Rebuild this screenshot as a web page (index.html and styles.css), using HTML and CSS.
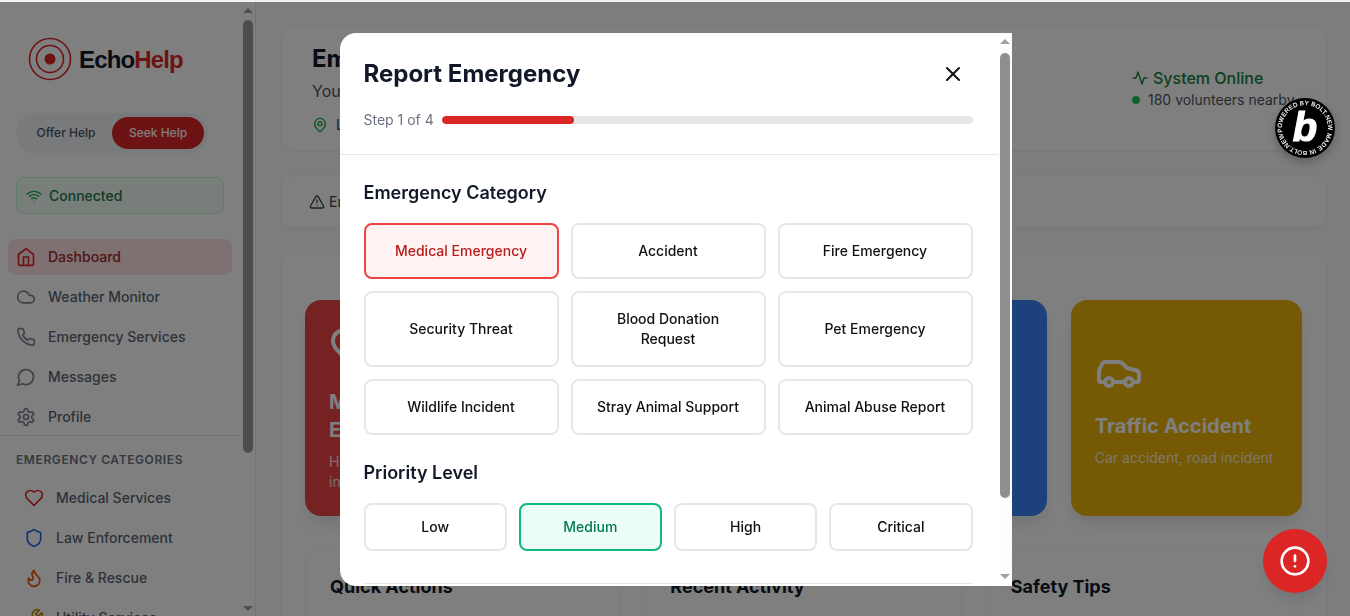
FILE: index.html
```html
<!DOCTYPE html>
<html lang="en">
<head>
<meta charset="utf-8">
<title>EchoHelp</title>
<link rel="stylesheet" href="styles.css">
</head>
<body>
<div class="app">
  <aside class="sidebar">
    <div class="side-content">
      <div class="logo">
        <svg class="logo-mark" viewBox="0 0 44 44"><circle cx="22" cy="22" r="20.5"/><circle cx="22" cy="22" r="13.5"/><circle class="dot" cx="22" cy="22" r="5.5"/></svg>
        <span class="logo-text">Echo<b>Help</b></span>
      </div>
      <div class="toggle"><span class="toggle-off">Offer Help</span><span class="toggle-on">Seek Help</span></div>
      <div class="status"><svg class="ico i16" viewBox="0 0 24 24"><path d="M5 12.55a11 11 0 0 1 14.08 0"/><path d="M1.42 9a16 16 0 0 1 21.16 0"/><path d="M8.53 16.11a6 6 0 0 1 6.95 0"/><path d="M12 20h.01"/></svg>Connected</div>
      <nav class="nav">
        <a class="nav-item active"><svg class="ico i20" viewBox="0 0 24 24"><path d="m3 9 9-7 9 7v11a2 2 0 0 1-2 2H5a2 2 0 0 1-2-2z"/><path d="M9 22V12h6v10"/></svg>Dashboard</a>
        <a class="nav-item"><svg class="ico i20" viewBox="0 0 24 24"><path d="M17.5 19H9a7 7 0 1 1 6.71-9h1.79a4.5 4.5 0 1 1 0 9Z"/></svg>Weather Monitor</a>
        <a class="nav-item"><svg class="ico i20" viewBox="0 0 24 24"><path d="M22 16.92v3a2 2 0 0 1-2.18 2 19.79 19.79 0 0 1-8.63-3.07 19.5 19.5 0 0 1-6-6 19.79 19.79 0 0 1-3.07-8.67A2 2 0 0 1 4.11 2h3a2 2 0 0 1 2 1.72 12.84 12.84 0 0 0 .7 2.81 2 2 0 0 1-.45 2.11L8.09 9.91a16 16 0 0 0 6 6l1.27-1.27a2 2 0 0 1 2.11-.45 12.84 12.84 0 0 0 2.81.7A2 2 0 0 1 22 16.92z"/></svg>Emergency Services</a>
        <a class="nav-item"><svg class="ico i20" viewBox="0 0 24 24"><path d="M7.9 20A9 9 0 1 0 4 16.1L2 22Z"/></svg>Messages</a>
        <a class="nav-item"><svg class="ico i20" viewBox="0 0 24 24"><path d="M12.22 2h-.44a2 2 0 0 0-2 2v.18a2 2 0 0 1-1 1.73l-.43.25a2 2 0 0 1-2 0l-.15-.08a2 2 0 0 0-2.73.73l-.22.38a2 2 0 0 0 .73 2.73l.15.1a2 2 0 0 1 1 1.72v.51a2 2 0 0 1-1 1.74l-.15.09a2 2 0 0 0-.73 2.73l.22.38a2 2 0 0 0 2.73.73l.15-.08a2 2 0 0 1 2 0l.43.25a2 2 0 0 1 1 1.73V20a2 2 0 0 0 2 2h.44a2 2 0 0 0 2-2v-.18a2 2 0 0 1 1-1.73l.43-.25a2 2 0 0 1 2 0l.15.08a2 2 0 0 0 2.73-.73l.22-.39a2 2 0 0 0-.73-2.73l-.15-.08a2 2 0 0 1-1-1.74v-.5a2 2 0 0 1 1-1.74l.15-.09a2 2 0 0 0 .73-2.73l-.22-.38a2 2 0 0 0-2.73-.73l-.15.08a2 2 0 0 1-2 0l-.43-.25a2 2 0 0 1-1-1.73V4a2 2 0 0 0-2-2z"/><circle cx="12" cy="12" r="3"/></svg>Profile</a>
      </nav>
      <div class="cats">
        <h3 class="cats-title">EMERGENCY CATEGORIES</h3>
        <a class="cat-item"><svg class="ico i20 red" viewBox="0 0 24 24"><path d="M19 14c1.49-1.46 3-3.21 3-5.5A5.5 5.5 0 0 0 16.5 3c-1.76 0-3 .5-4.5 2-1.5-1.5-2.74-2-4.5-2A5.5 5.5 0 0 0 2 8.5c0 2.3 1.5 4.05 3 5.5l7 7Z"/></svg>Medical Services</a>
        <a class="cat-item"><svg class="ico i20 blue" viewBox="0 0 24 24"><path d="M20 13c0 5-3.5 7.5-7.66 8.95a1 1 0 0 1-.67-.01C7.5 20.5 4 18 4 13V6a1 1 0 0 1 1-1c2 0 4.5-1.2 6.24-2.72a1.17 1.17 0 0 1 1.52 0C14.51 3.81 17 5 19 5a1 1 0 0 1 1 1z"/></svg>Law Enforcement</a>
        <a class="cat-item"><svg class="ico i20 orange" viewBox="0 0 24 24"><path d="M8.5 14.5A2.5 2.5 0 0 0 11 12c0-1.38-.5-2-1-3-1.072-2.143-.224-4.054 2-6 .5 2.5 2 4.9 4 6.5 2 1.6 3 3.5 3 5.5a7 7 0 1 1-14 0c0-1.153.433-2.294 1-3a2.5 2.5 0 0 0 2.5 2.5z"/></svg>Fire &amp; Rescue</a>
        <a class="cat-item"><svg class="ico i20 yellow" viewBox="0 0 24 24"><path d="M14.7 6.3a1 1 0 0 0 0 1.4l1.6 1.6a1 1 0 0 0 1.4 0l3.77-3.77a6 6 0 0 1-7.94 7.94l-6.91 6.91a2.12 2.12 0 0 1-3-3l6.91-6.91a6 6 0 0 1 7.94-7.94l-3.76 3.76z"/></svg>Utility Services</a>
      </div>
    </div>
    <div class="bar bar-side"><i class="arrow up"></i><i class="thumb"></i><i class="arrow down"></i></div>
  </aside>

  <main class="main">
    <section class="card head-card">
      <div class="head-left">
        <h1>Emergency Dashboard</h1>
        <p class="sub">Your safety is our priority</p>
        <p class="loc"><svg class="ico i16 pin" viewBox="0 0 24 24"><path d="M20 10c0 6-8 12-8 12s-8-6-8-12a8 8 0 0 1 16 0Z"/><circle cx="12" cy="10" r="3"/></svg>Location detected</p>
      </div>
      <div class="head-right">
        <div class="online"><svg class="ico i16" viewBox="0 0 24 24"><path d="M22 12h-4l-3 9L9 3l-3 9H2"/></svg>System Online</div>
        <div class="vol"><i class="vol-dot"></i>180 volunteers nearby</div>
      </div>
    </section>
    <section class="card alert-card"><svg class="ico i16" viewBox="0 0 24 24"><path d="m21.73 18-8-14a2 2 0 0 0-3.48 0l-8 14A2 2 0 0 0 4 21h16a2 2 0 0 0 1.73-3Z"/><path d="M12 9v4"/><path d="M12 17h.01"/></svg>Emergency alerts</section>
    <section class="card big-card">
      <div class="tiles">
        <div class="tile t-red"><svg class="ico i48" viewBox="0 0 24 24"><path d="M19 14c1.49-1.46 3-3.21 3-5.5A5.5 5.5 0 0 0 16.5 3c-1.76 0-3 .5-4.5 2-1.5-1.5-2.74-2-4.5-2A5.5 5.5 0 0 0 2 8.5c0 2.3 1.5 4.05 3 5.5l7 7Z"/></svg><h2>Medical Emergency</h2><p>Heart attack, accident, injury</p></div>
        <div class="tile t-orange"></div>
        <div class="tile t-blue"></div>
        <div class="tile t-yellow"><svg class="ico i48" viewBox="0 0 24 24"><path d="M19 17h2c.6 0 1-.4 1-1v-3c0-.9-.7-1.7-1.5-1.9C18.7 10.6 16 10 16 10s-1.3-1.4-2.2-2.3c-.5-.4-1.1-.7-1.8-.7H5c-.6 0-1.1.4-1.4.9l-1.4 2.9A3.7 3.7 0 0 0 2 12v4c0 .6.4 1 1 1h2"/><circle cx="7" cy="17" r="2"/><path d="M9 17h6"/><circle cx="17" cy="17" r="2"/></svg><h2>Traffic Accident</h2><p>Car accident, road incident</p></div>
      </div>
      <div class="panels">
        <div class="panel"><h3>Quick Actions</h3></div>
        <div class="panel"><h3>Recent Activity</h3></div>
        <div class="panel"><h3>Safety Tips</h3></div>
      </div>
    </section>
  </main>
</div>

<div class="overlay">
  <div class="modal">
    <div class="modal-content">
      <header class="modal-head">
        <div class="title-row">
          <h2 class="modal-title">Report Emergency</h2>
          <svg class="close" viewBox="0 0 24 24"><path d="M18 6 6 18"/><path d="m6 6 12 12"/></svg>
        </div>
        <div class="step-row"><span class="step">Step 1 of 4</span><div class="progress"><div class="progress-fill"></div></div></div>
      </header>
      <div class="modal-body">
        <h3 class="sec-title">Emergency Category</h3>
        <div class="cat-grid">
          <button class="opt opt-red">Medical Emergency</button>
          <button class="opt">Accident</button>
          <button class="opt">Fire Emergency</button>
          <button class="opt">Security Threat</button>
          <button class="opt">Blood Donation Request</button>
          <button class="opt">Pet Emergency</button>
          <button class="opt">Wildlife Incident</button>
          <button class="opt">Stray Animal Support</button>
          <button class="opt">Animal Abuse Report</button>
        </div>
        <h3 class="sec-title">Priority Level</h3>
        <div class="pri-grid">
          <button class="opt pri">Low</button>
          <button class="opt pri opt-green">Medium</button>
          <button class="opt pri">High</button>
          <button class="opt pri">Critical</button>
        </div>
        <div class="modal-foot"></div>
      </div>
    </div>
    <div class="bar bar-modal"><i class="arrow up"></i><i class="thumb"></i><i class="arrow down"></i></div>
  </div>
</div>

<a class="bolt">
  <svg viewBox="0 0 60 60">
    <defs><path id="ring" d="M7.4 34.4A23 23 0 1 1 52.6 25.6A23 23 0 1 1 7.4 34.4"/></defs>
    <circle class="bolt-bg" cx="30" cy="30" r="30"/>
    <text class="bolt-ring"><textPath href="#ring" textLength="143" lengthAdjust="spacing">POWERED BY BOLT.NEW MADE IN BOLT.NEW</textPath></text>
    <text class="bolt-b" x="30" y="43" text-anchor="middle">b</text>
  </svg>
</a>
<button class="fab"><svg class="fab-ico" viewBox="0 0 24 24"><circle cx="12" cy="12" r="10"/><path d="M12 8v4"/><path d="M12 16h.01"/></svg></button>
</body>
</html>
```
FILE: styles.css
```css
* { box-sizing: border-box; }
html, body { margin: 0; height: 100%; }
body {
  overflow: hidden;
  padding-top: 2px;
  background: #f2f2f2;
  font-family: Inter, "Liberation Sans", sans-serif;
  color: #111827;
  display: flex;
  flex-direction: column;
}
h1, h2, h3, p { margin: 0; }
.app { flex: 1; min-height: 0; display: flex; background: #fbfdfc; }

.ico { fill: none; stroke: currentColor; stroke-width: 2; stroke-linecap: round; stroke-linejoin: round; flex: none; }
.i16 { width: 16px; height: 16px; }
.i20 { width: 20px; height: 20px; }
.i48 { width: 48px; height: 48px; }

/* Scrollbars */
.bar { display: flex; flex-direction: column; align-items: center; flex: none; }
.thumb { display: block; width: 10px; border-radius: 5px; }
.arrow { display: block; width: 0; height: 0; border-left: 5px solid transparent; border-right: 5px solid transparent; }
.arrow.up { border-bottom: 5px solid; }
.arrow.down { border-top: 5px solid; margin-top: auto; }

.bar-side { width: 15px; padding: 6px 0 5px; }
.bar-side .thumb { height: 433px; margin-top: 7px; background: #9a9a9a; }
.bar-side .arrow { color: #a0a0a0; }

.bar-modal { width: 14px; background: #fdfdfd; padding: 6px 0 7px; }
.bar-modal .thumb { height: 445px; margin-top: 9px; background: #8f8f8f; }
.bar-modal .arrow { color: #a0a0a0; }

/* Sidebar */
.sidebar { width: 256px; flex: none; display: flex; background: #fff; border-right: 1px solid #e5e7eb; overflow: hidden; }
.side-content { width: 240px; flex: none; overflow: hidden; }
.logo { display: flex; align-items: center; gap: 7px; padding: 35px 0 0 28px; height: 79px; }
.logo-mark { width: 44px; height: 44px; fill: none; stroke: #dc2626; stroke-width: 1.6; flex: none; }
.logo-mark .dot { fill: #dc2626; stroke: none; }
.logo-text { font-family: "Liberation Sans", sans-serif; font-size: 24px; font-weight: 700; color: #111827; letter-spacing: -0.85px; padding-top: 2px; }
.logo-text b { color: #dc2626; font-weight: 700; }
.toggle { margin: 32px 0 0 16px; width: 192px; height: 40px; border-radius: 20px; background: #f3f4f6; display: flex; align-items: center; padding: 4px; font-size: 12px; font-weight: 500; }
.toggle-off { width: 92px; text-align: center; color: #4b5563; padding-bottom: 1px; }
.toggle-on { width: 92px; height: 32px; border-radius: 16px; background: #dc2626; color: #fff; display: flex; align-items: center; justify-content: center; padding-bottom: 1px; }
.status { margin: 24px 16px 0; height: 37px; border: 1px solid #bbf7d0; background: #f0fdf4; border-radius: 8px; display: flex; align-items: center; gap: 7px; padding-left: 9px; font-size: 14px; font-weight: 500; color: #26774a; }
.status .ico { color: #16a34a; }
.nav { margin-top: 25px; padding: 0 8px; display: flex; flex-direction: column; gap: 4px; }
.nav-item { height: 36px; display: flex; align-items: center; gap: 12px; padding: 0 0 1px 8px; border-radius: 8px; font-size: 14px; font-weight: 500; color: #5b6573; }
.nav-item .ico { color: #7b8290; }
.nav-item.active { background: #fee2e2; color: #9f2a2a; }
.nav-item.active .ico { color: #dc2626; }
.cats { border-top: 1px solid #e5e7eb; padding: 16px 16px 0; }
.cats-title { font-size: 12px; line-height: 16px; font-weight: 600; letter-spacing: 0.6px; color: #6b7280; margin-bottom: 10px; }
.cat-item { height: 40px; display: flex; align-items: center; gap: 12px; padding: 0 0 1px 8px; font-size: 14px; font-weight: 500; color: #5b6573; }
.red { color: #dc2626; } .blue { color: #2563eb; } .orange { color: #ea580c; } .yellow { color: #ca8a04; }

/* Main */
.main { flex: 1; min-width: 0; padding: 24px 23px 24px 24px; overflow: hidden; background: #f9fcfb; display: flex; flex-direction: column; gap: 24px; }
.card { background: #fff; border: 1px solid #f3f4f6; border-radius: 16px; box-shadow: 0 1px 2px rgba(0,0,0,.05); flex: none; }
.head-card { height: 125px; padding: 16px 32px 16px 31px; display: flex; justify-content: space-between; }
.head-left h1 { font-size: 24px; line-height: 32px; font-weight: 700; }
.sub { font-size: 16px; line-height: 24px; color: #4b5563; margin-top: 4px; }
.loc { display: flex; align-items: center; gap: 8px; margin-top: 12px; font-size: 14px; line-height: 20px; color: #374151; }
.pin { color: #16a34a; }
.head-right { width: 162px; padding-top: 23px; margin-left: auto; }
.online { display: flex; align-items: center; gap: 5px; font-size: 16px; line-height: 24px; font-weight: 500; color: #15803d; white-space: nowrap; }
.vol { display: flex; align-items: center; gap: 8px; font-size: 14px; line-height: 20px; color: #4b5563; white-space: nowrap; }
.vol-dot { width: 8px; height: 8px; border-radius: 50%; background: #22c55e; flex: none; }
.alert-card { height: 53px; border-radius: 12px; display: flex; align-items: center; gap: 4px; padding-left: 28px; font-size: 14px; color: #374151; }
.big-card { padding: 47px 24px 0; height: 400px; }
.tiles { display: grid; grid-template-columns: repeat(4, 1fr); gap: 24px; height: 216px; }
.tile { border-radius: 16px; padding: 24px; color: #fff; display: flex; flex-direction: column; justify-content: center; box-shadow: 0 10px 15px -3px rgba(0,0,0,.1); }
.tile .ico { margin-bottom: 16px; }
.tile h2 { font-size: 20px; line-height: 28px; font-weight: 700; margin-bottom: 8px; }
.tile p { font-size: 14px; line-height: 20px; opacity: .8; }
.t-red { background: #ef4444; }
.t-orange { background: #f97316; }
.t-blue { background: #3b82f6; }
.t-yellow { background: #eab308; }
.panels { display: grid; grid-template-columns: repeat(3, 1fr); gap: 24px; margin-top: 32px; }
.panel { height: 200px; border: 1px solid #f3f4f6; border-radius: 16px; padding: 24px; }
.panel h3 { font-size: 18px; line-height: 28px; font-weight: 700; }

/* Modal */
.overlay { position: fixed; left: 0; right: 0; top: 2px; bottom: 0; padding: 1px 0 0 1px; background: rgba(0,0,0,.5); display: flex; align-items: center; justify-content: center; }
.modal { width: 672px; height: 553px; background: #fff; border-radius: 16px 0 0 16px; display: flex; overflow: hidden; }
.modal-content { flex: 1; min-width: 0; overflow: hidden; }
.modal-head { padding: 25px 25px 24px 24px; border-bottom: 1px solid #e5e7eb; }
.title-row { display: flex; align-items: center; justify-content: space-between; height: 32px; margin-bottom: 20px; }
.modal-title { font-size: 24px; line-height: 32px; font-weight: 700; color: #111827; }
.close { width: 24px; height: 24px; fill: none; stroke: #111; stroke-width: 2; stroke-linecap: round; margin-right: 8px; }
.step-row { display: flex; align-items: center; gap: 8px; height: 20px; }
.step { font-size: 14px; line-height: 20px; color: #6b7280; white-space: nowrap; }
.progress { flex: 1; height: 8px; border-radius: 4px; background: #e5e7eb; overflow: hidden; }
.progress-fill { width: 25%; height: 100%; border-radius: 4px; background: #dc2626; }
.modal-body { padding: 24px 25px 0 24px; }
.sec-title { font-size: 18px; line-height: 28px; font-weight: 600; color: #111827; margin-bottom: 16px; }
.cat-grid { display: grid; grid-template-columns: repeat(3, 1fr); grid-template-rows: 56px 76px 56px; gap: 12px; margin-bottom: 24px; }
.pri-grid { display: grid; grid-template-columns: repeat(4, 1fr); gap: 12px; }
.opt { font-family: inherit; font-size: 14px; line-height: 20px; font-weight: 500; background: #fff; color: #111; border: 2px solid #e5e7eb; border-radius: 8px; padding: 0 16px; }
.pri { height: 48px; }
.opt-red { border-color: #ef4444; background: #fef2f2; color: #b91c1c; }
.opt-green { border-color: #10b981; background: #ecfdf5; color: #047857; }
.modal-foot { margin-top: 32px; border-top: 1px solid #e5e7eb; }

/* Floating */
.bolt { position: fixed; left: 1275px; top: 98px; width: 60px; height: 60px; border-radius: 50%; box-shadow: 0 4px 10px rgba(0,0,0,.25); }
.bolt svg { display: block; width: 60px; height: 60px; }
.bolt-bg { fill: #000; }
.bolt-ring { font-family: "Liberation Sans", sans-serif; font-size: 6.2px; font-weight: 400; fill: #fff; stroke: #fff; stroke-width: .15px; }
.bolt-b { font-family: "Liberation Sans", sans-serif; font-size: 40px; font-weight: 700; font-style: italic; fill: #fff; stroke: #fff; stroke-width: 1.2px; }
.fab { position: fixed; left: 1263px; top: 529px; width: 64px; height: 64px; border: 0; padding: 0; border-radius: 50%; background: #dc2626; display: flex; align-items: center; justify-content: center; box-shadow: 0 10px 15px -3px rgba(0,0,0,.1); }
.fab-ico { width: 32px; height: 32px; fill: none; stroke: #fff; stroke-width: 2; stroke-linecap: round; stroke-linejoin: round; }
```
